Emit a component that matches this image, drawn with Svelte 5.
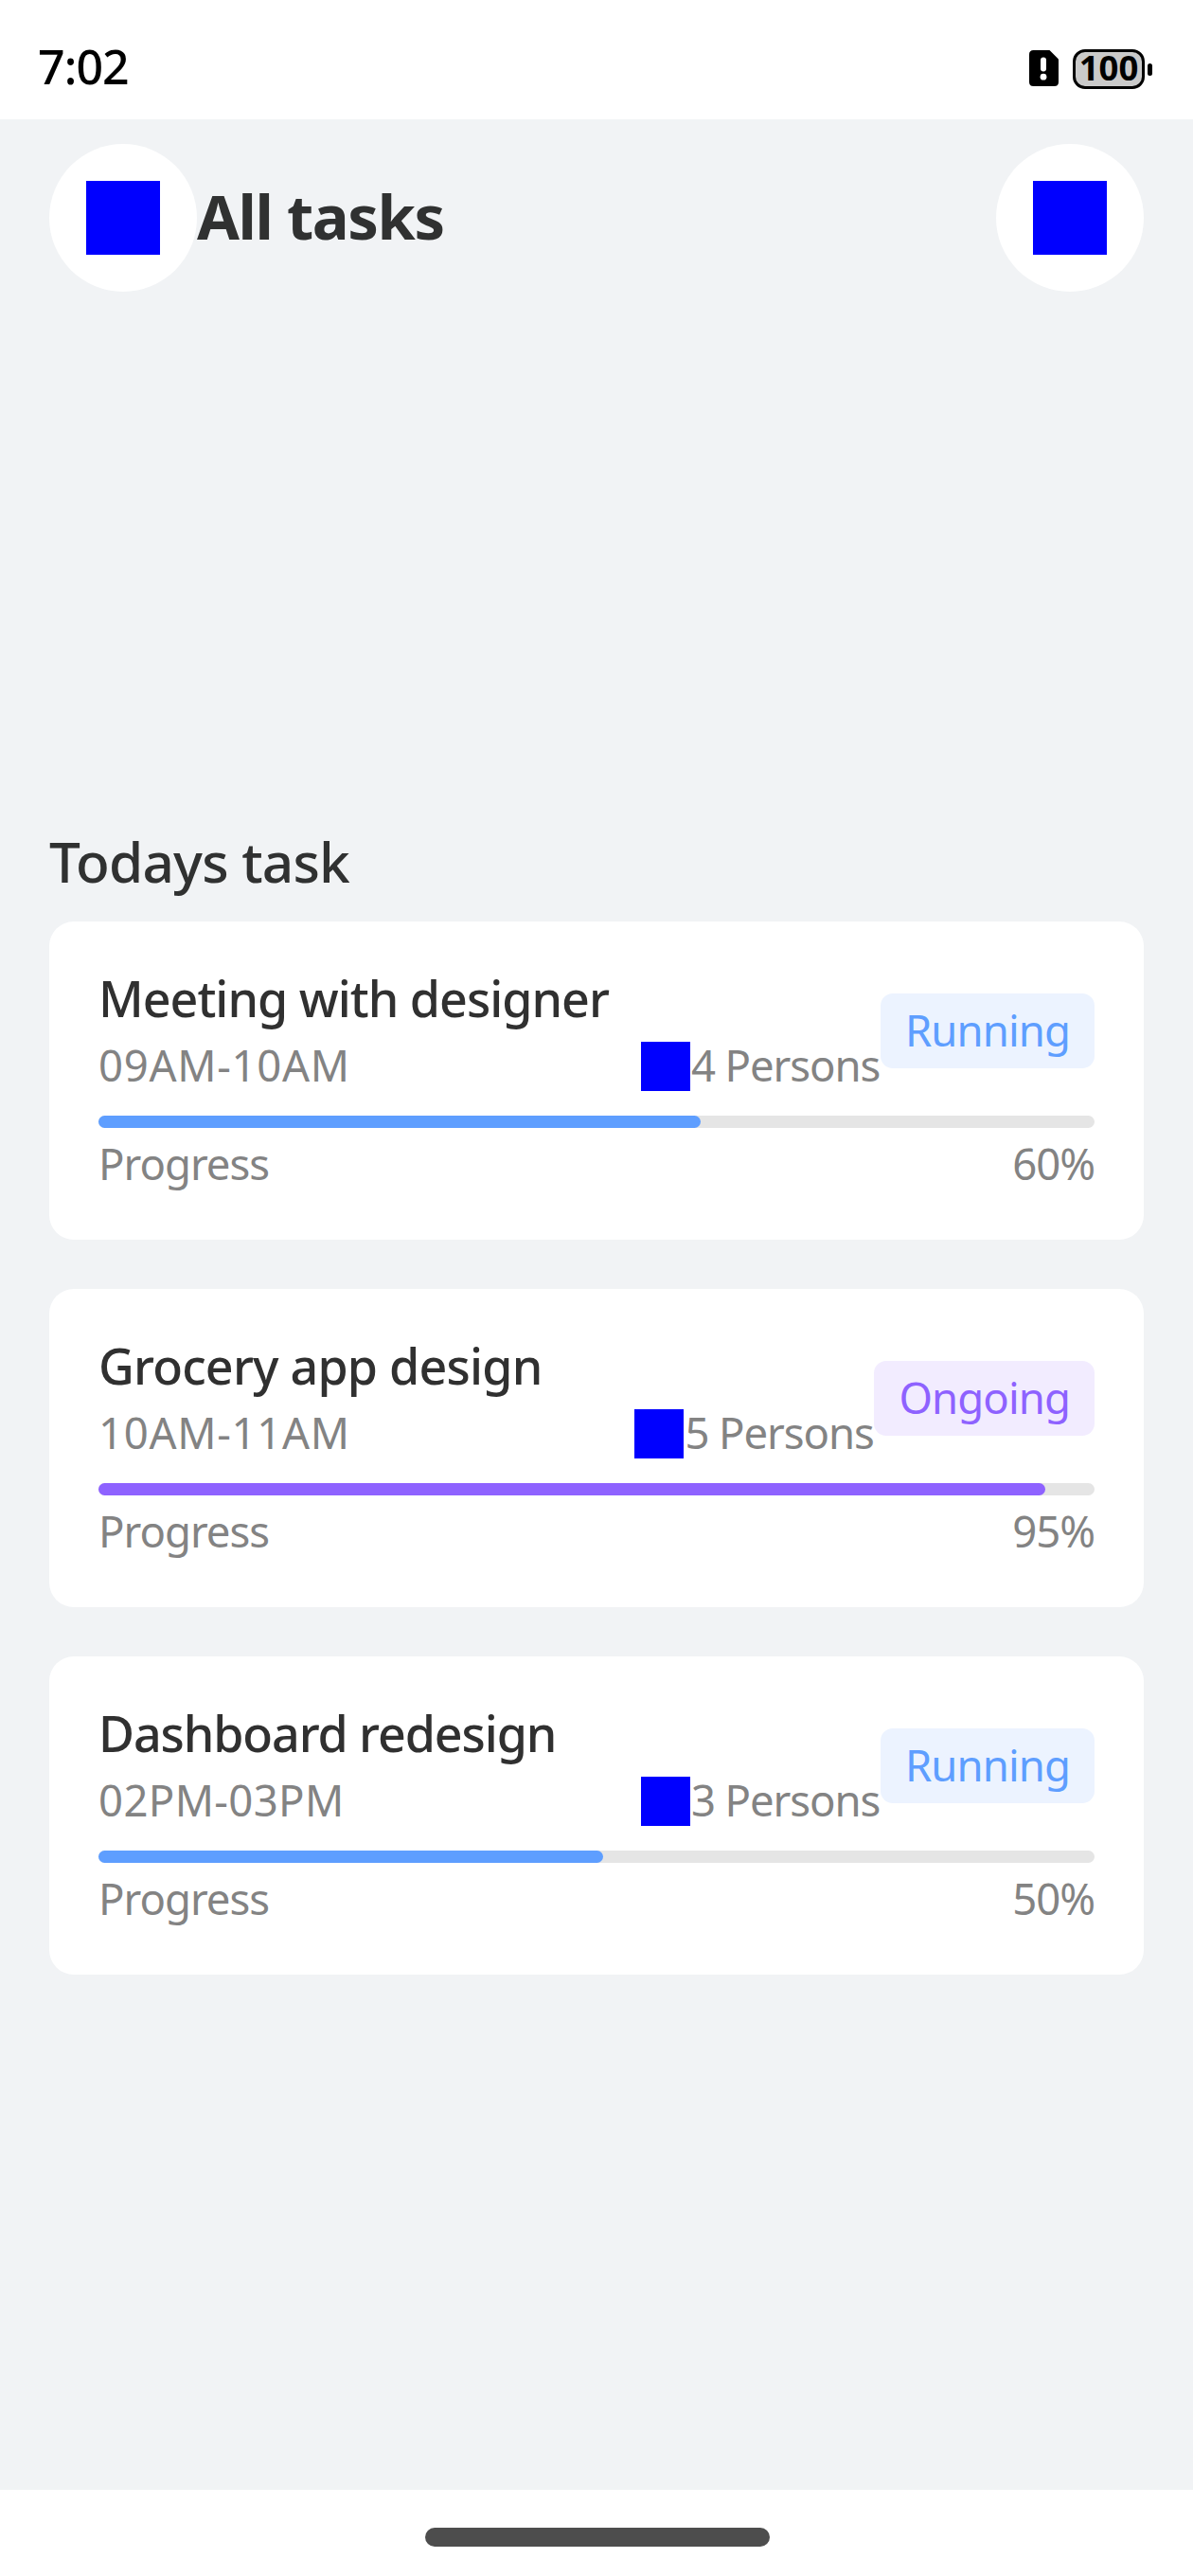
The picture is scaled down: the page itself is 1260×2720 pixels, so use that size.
<script>
  const tasks = [
    { title: 'Meeting with designer', time: '09AM-10AM', persons: 4, status: 'Running', progress: 60, tone: 'blue', fit: 'a', slot: 'morning' },
    { title: 'Grocery app design', time: '10AM-11AM', persons: 5, status: 'Ongoing', progress: 95, tone: 'purple', fit: 'b', slot: 'morning' },
    { title: 'Dashboard redesign', time: '02PM-03PM', persons: 3, status: 'Running', progress: 50, tone: 'blue', fit: 'c', slot: 'afternoon' }
  ];
</script>

<div class="screen">
  <div class="status">
    <span class="clock">7:02</span>
    <div class="indicators">
      <svg class="sim" width="31" height="38" viewBox="0 0 31 38">
        <path d="M4.500 0H21.500L31 9.500V33.500Q31 38 26.500 38H4.500Q0 38 0 33.500V4.500Q0 0 4.500 0Z" fill="#000" />
        <rect x="12" y="7.500" width="6" height="15" rx="3" fill="#fff" />
        <circle cx="15" cy="28.200" r="3.400" fill="#fff" />
      </svg>
      <div class="battery"><span>100</span></div>
      <div class="nub"></div>
    </div>
  </div>

  <main>
    <header>
      <div class="round"><i></i></div>
      <h1>All tasks</h1>
      <div class="round"><i></i></div>
    </header>

    <h2>Todays task</h2>

    <div class="list">
      {#each tasks as t}
        <article class={t.tone}>
          <div class="top">
            <div class="info">
              <h3 class={t.fit}>{t.title}</h3>
              <div class="meta">
                <span class="time {t.slot}">{t.time}</span>
                <div class="people"><i></i><span>{t.persons} Persons</span></div>
              </div>
            </div>
            <div class="chip"><span>{t.status}</span></div>
          </div>
          <div class="track"><div class="fill" style="width: calc((100% - 13px) * {t.progress / 100} + 13px)"></div></div>
          <div class="foot"><span>Progress</span><span class="pct">{t.progress}%</span></div>
        </article>
      {/each}
    </div>
  </main>

  <div class="nav"><div class="handle"></div></div>
</div>

<style>
  :global(body) { margin: 0; background: #fff; }
  .screen {
    width: 1260px;
    height: 2720px;
    display: flex;
    flex-direction: column;
    font-family: "Noto Sans", sans-serif;
    overflow: hidden;
    white-space: nowrap;
  }
  .status {
    height: 126px;
    box-sizing: border-box;
    padding: 0 43px 0 40px;
    display: flex;
    justify-content: space-between;
    align-items: center;
    background: #fff;
  }
  .clock { font-size: 50px; font-weight: 500; letter-spacing: -0.900px; line-height: 60px; padding-top: 13px; color: #000; }
  .indicators { display: flex; align-items: center; padding-top: 20px; }
  .sim { display: block; margin: 0 15.500px 2px 0; }
  .battery {
    width: 76px;
    height: 42px;
    box-sizing: border-box;
    border: 3px solid #000;
    border-radius: 13px;
    background: #cacaca;
    display: flex;
    align-items: center;
    justify-content: center;
  }
  .battery span { font-size: 36.500px; font-weight: 700; line-height: 36px; padding-bottom: 4px; color: #000; }
  .nub { width: 5px; height: 13px; border-radius: 3px; background: #000; margin-left: 3px; }

  main { flex: 1; background: #f1f3f5; padding: 26px 52px 0; }
  header { display: flex; align-items: center; height: 156px; }
  .round {
    width: 156px;
    height: 156px;
    border-radius: 50%;
    background: #fff;
    display: flex;
    align-items: center;
    justify-content: center;
  }
  .round i { width: 78px; height: 78px; background: #00f; }
  h1 { flex: 1; margin: 0; font-size: 65px; font-weight: 700; letter-spacing: -1.400px; line-height: 76px; padding-bottom: 5px; color: #303131; }
  h2 { margin: 567px 0 0; height: 98px; font-size: 58.500px; font-weight: 500; letter-spacing: -0.800px; line-height: 69px; color: #303131; }

  .list { display: flex; flex-direction: column; gap: 52px; }
  article { height: 336px; box-sizing: border-box; padding: 52px; border-radius: 26px; background: #fff; }
  .top { display: flex; align-items: center; }
  .info { flex: 1; }
  h3 { margin: 0; font-size: 52px; font-weight: 500; line-height: 57px; padding-bottom: 4px; color: #303030; }
  .a { letter-spacing: -1px; }
  .b { letter-spacing: -0.800px; }
  .c { letter-spacing: -1.100px; }
  .meta { display: flex; align-items: center; justify-content: space-between; height: 52px; margin-top: 14px; font-size: 45.500px; color: #838383; }
  .time { line-height: 49px; padding-bottom: 4px; }
  .morning { letter-spacing: 0.700px; }
  .afternoon { letter-spacing: 0.350px; }
  .people { display: flex; align-items: center; }
  .people i { width: 52px; height: 52px; background: #00f; }
  .people span { box-sizing: border-box; width: 201px; padding: 0 0 4px 1px; line-height: 48px; letter-spacing: -1.100px; }
  .chip { height: 79px; box-sizing: border-box; padding: 0 26px 4px; border-radius: 13px; display: flex; align-items: center; font-size: 45.500px; letter-spacing: -0.920px; }
  .chip span { line-height: 52px; }
  .blue .chip { background: #ecf3ff; color: #5e9eff; }
  .purple .chip { background: #f2ecff; color: #8e62ff; }
  .track { height: 13px; margin-top: 26px; border-radius: 6.500px; background: #e5e5e5; }
  .fill { height: 13px; border-radius: 6.500px; }
  .blue .fill { background: #5e9eff; }
  .purple .fill { background: #8e62ff; }
  .foot { display: flex; justify-content: space-between; margin-top: 13px; font-size: 45.500px; line-height: 49px; letter-spacing: -1px; color: #838383; }

  .nav { height: 91px; background: #fff; display: flex; justify-content: center; align-items: flex-start; }
  .handle { width: 364px; height: 20px; margin: 40px 0 0 1px; border-radius: 10px; background: #4d4d4d; }
</style>
